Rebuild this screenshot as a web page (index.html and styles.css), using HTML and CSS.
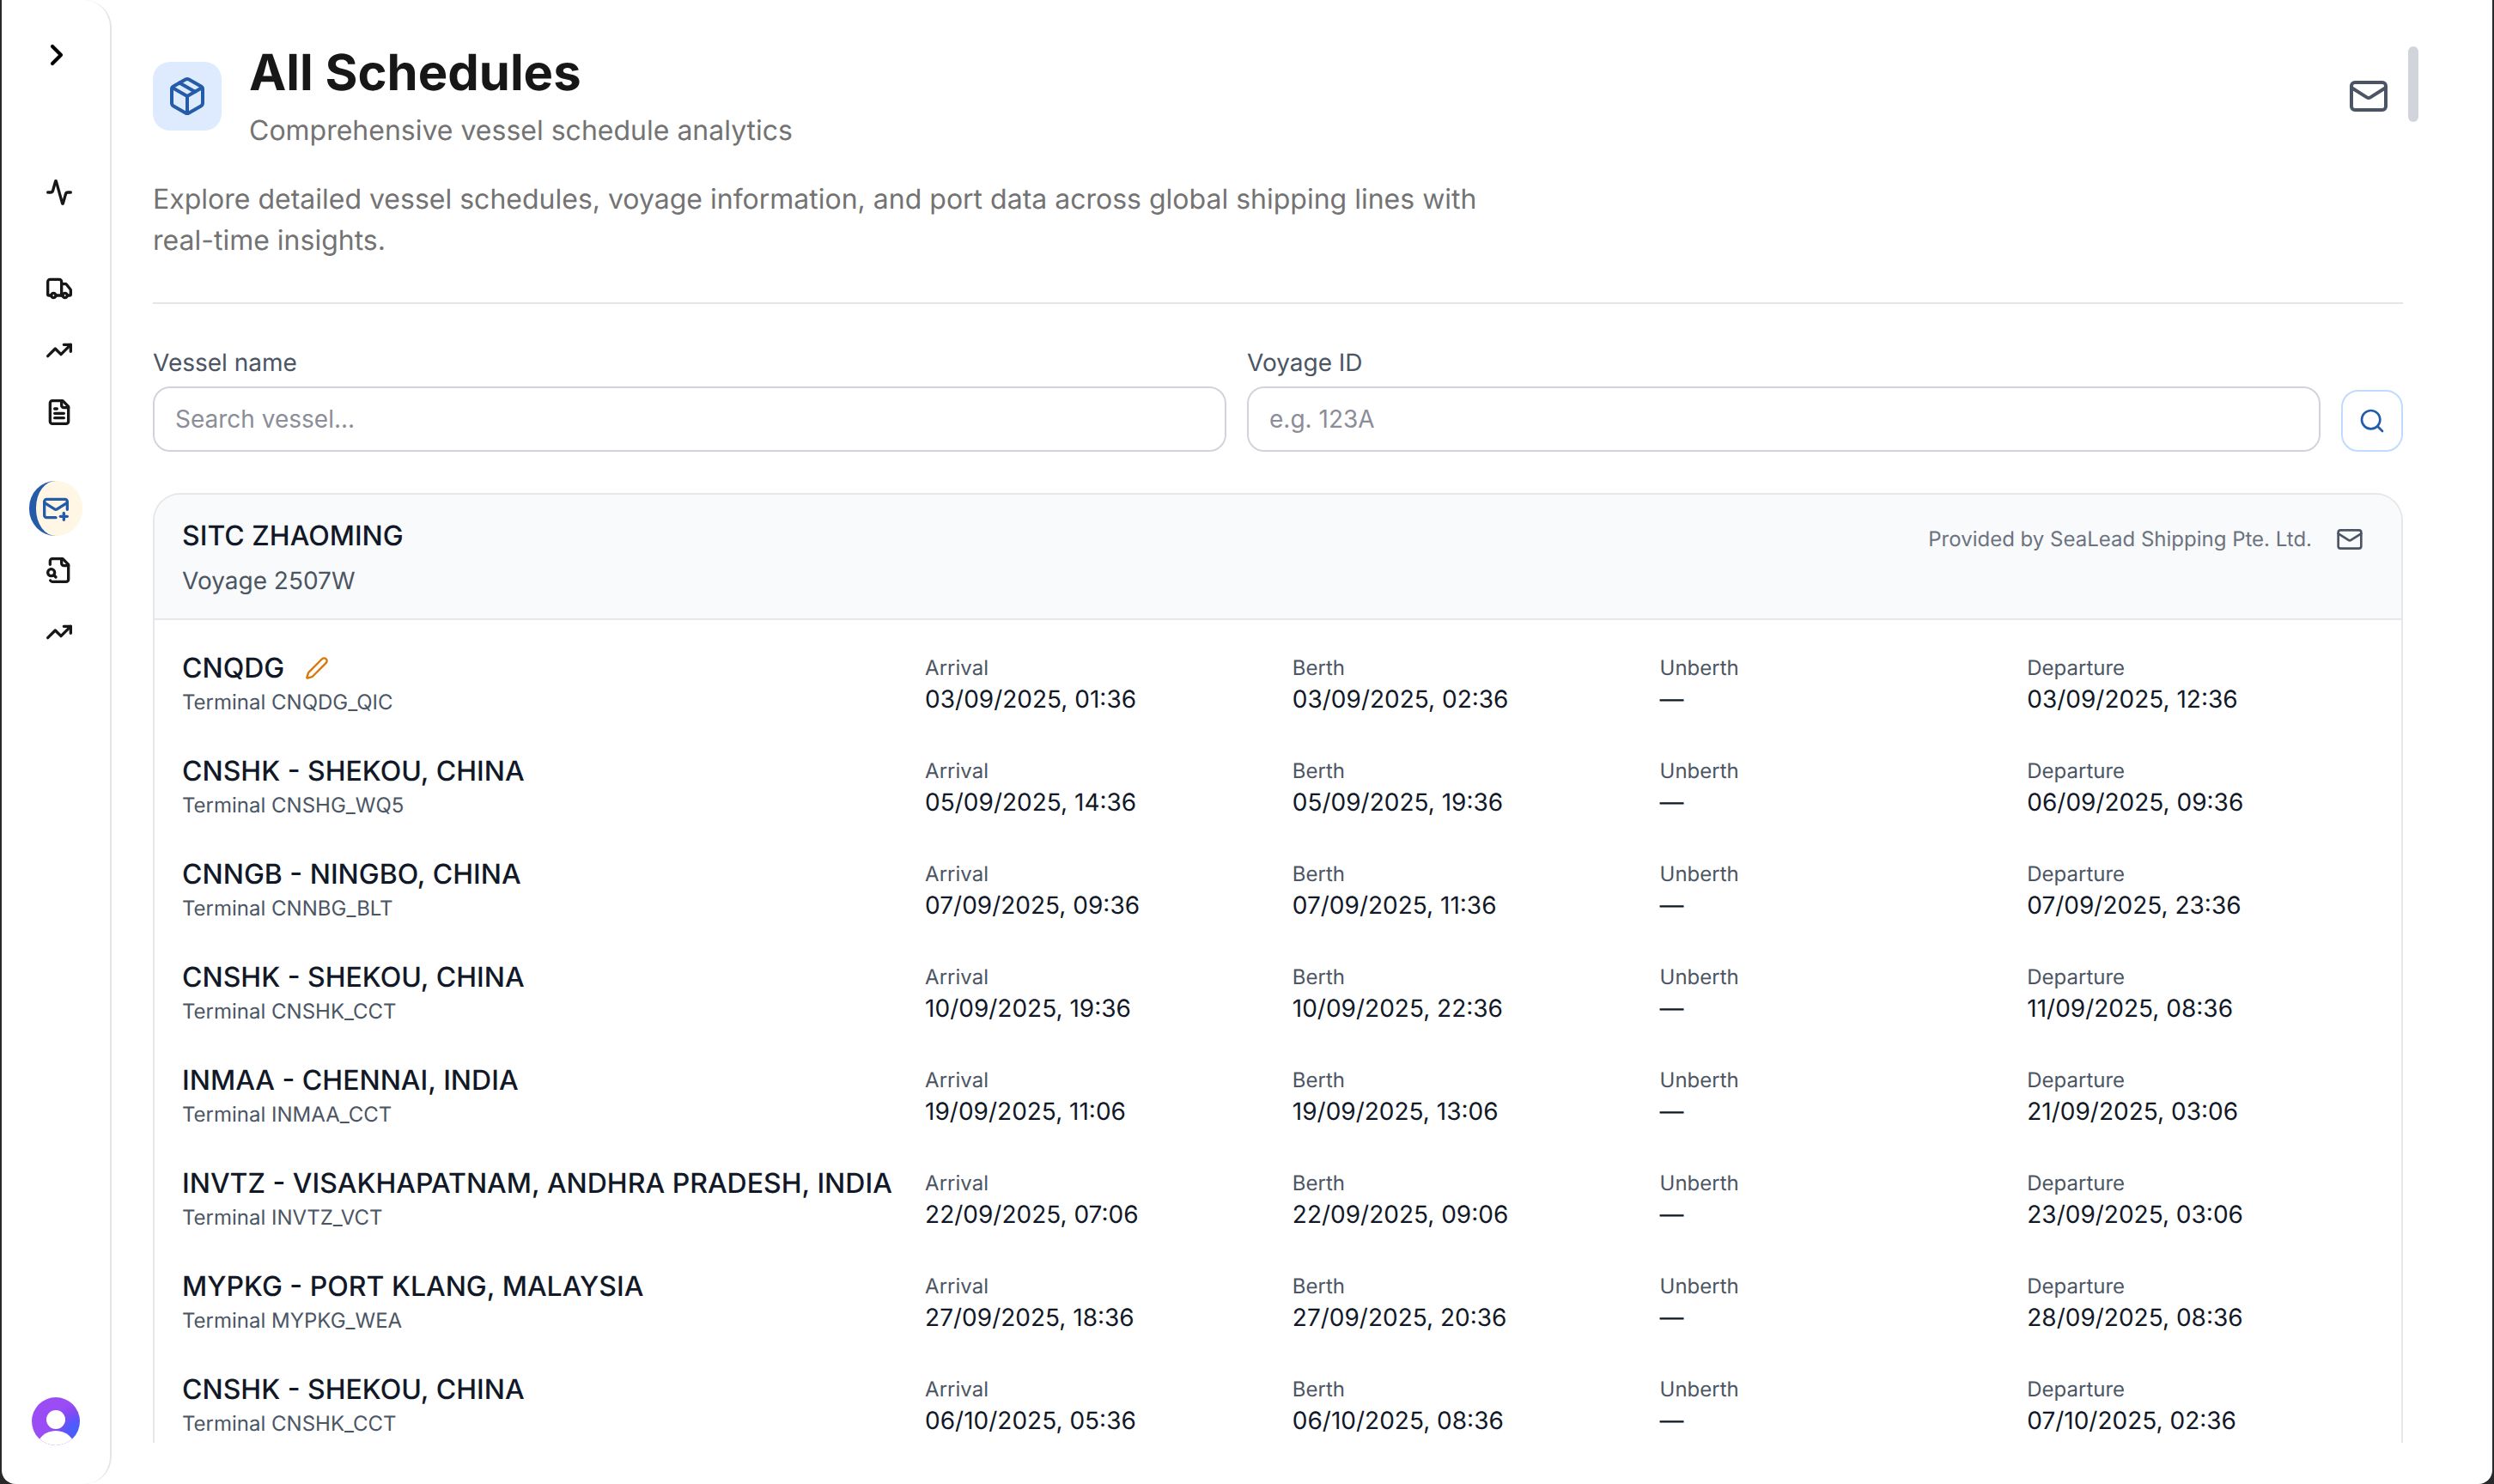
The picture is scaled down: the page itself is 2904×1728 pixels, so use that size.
FILE: index.html
```html
<!DOCTYPE html>
<html lang="en">
<head>
    <meta charset="UTF-8">
    <meta name="viewport" content="width=device-width, initial-scale=1.0">
    <title>All Schedules</title>
    <link rel="stylesheet" href="styles.css">
</head>
<body>
    <!-- Shared icon shapes -->
    <svg class="sprite" aria-hidden="true">
        <symbol id="mail" viewBox="0 0 24 24">
            <rect width="20" height="16" x="2" y="4" rx="2"/>
            <path d="m22 7-8.97 5.7a1.94 1.94 0 0 1-2.06 0L2 7"/>
        </symbol>
        <symbol id="trending" viewBox="0 0 24 24">
            <path d="M22 7 13.5 15.5 8.5 10.5 2 17"/>
            <path d="M16 7h6v6"/>
        </symbol>
    </svg>

    <div class="window">
        <aside class="sidebar">
            <button class="toggle" type="button" aria-label="Expand sidebar">
                <svg class="icon icon-md" viewBox="0 0 24 24"><path d="m9 18 6-6-6-6"/></svg>
            </button>

            <nav class="nav">
                <div class="nav-group">
                    <a class="nav-item" href="#" aria-label="Activity">
                        <svg class="icon icon-sm" viewBox="0 0 24 24"><path d="M22 12h-2.48a2 2 0 0 0-1.93 1.46l-2.35 8.36a.25.25 0 0 1-.48 0L9.24 2.18a.25.25 0 0 0-.48 0l-2.35 8.36A2 2 0 0 1 4.49 12H2"/></svg>
                    </a>
                </div>
                <div class="nav-group">
                    <a class="nav-item" href="#" aria-label="Shipments">
                        <svg class="icon icon-sm" viewBox="0 0 24 24">
                            <path d="M14 18V6a2 2 0 0 0-2-2H4a2 2 0 0 0-2 2v11a1 1 0 0 0 1 1h2"/>
                            <path d="M15 18H9"/>
                            <path d="M19 18h2a1 1 0 0 0 1-1v-3.65a1 1 0 0 0-.22-.624l-3.48-4.35A1 1 0 0 0 17.52 8H14"/>
                            <circle cx="17" cy="18" r="2"/>
                            <circle cx="7" cy="18" r="2"/>
                        </svg>
                    </a>
                    <a class="nav-item" href="#" aria-label="Trends">
                        <svg class="icon icon-sm"><use href="#trending"/></svg>
                    </a>
                    <a class="nav-item" href="#" aria-label="Documents">
                        <svg class="icon icon-sm" viewBox="0 0 24 24">
                            <path d="M15 2H6a2 2 0 0 0-2 2v16a2 2 0 0 0 2 2h12a2 2 0 0 0 2-2V7Z"/>
                            <path d="M14 2v4a2 2 0 0 0 2 2h4"/>
                            <path d="M10 9H8"/>
                            <path d="M16 13H8"/>
                            <path d="M16 17H8"/>
                        </svg>
                    </a>
                </div>
                <div class="nav-group">
                    <a class="nav-item active" href="#" aria-label="Schedules" aria-current="page">
                        <svg class="icon icon-sm" viewBox="0 0 24 24">
                            <path d="M22 13V6a2 2 0 0 0-2-2H4a2 2 0 0 0-2 2v12c0 1.1.9 2 2 2h8"/>
                            <path d="m22 7-8.97 5.7a1.94 1.94 0 0 1-2.06 0L2 7"/>
                            <path d="M19 16v6"/>
                            <path d="M16 19h6"/>
                        </svg>
                    </a>
                    <a class="nav-item" href="#" aria-label="Search documents">
                        <svg class="icon icon-sm" viewBox="0 0 24 24">
                            <path d="M14 2v4a2 2 0 0 0 2 2h4"/>
                            <path d="M4.268 21a2 2 0 0 0 1.727 1H18a2 2 0 0 0 2-2V7l-5-5H6a2 2 0 0 0-2 2v3"/>
                            <path d="m9 18-1.5-1.5"/>
                            <circle cx="5" cy="14" r="3"/>
                        </svg>
                    </a>
                    <a class="nav-item" href="#" aria-label="Analytics">
                        <svg class="icon icon-sm"><use href="#trending"/></svg>
                    </a>
                </div>
            </nav>

            <button class="avatar" type="button" aria-label="Account">
                <svg viewBox="0 0 56 56">
                    <defs>
                        <radialGradient id="avatarFill" cx="0.95" cy="0.72" r="0.62">
                            <stop offset="0" stop-color="#4361fb"/>
                            <stop offset="0.35" stop-color="#5558fa"/>
                            <stop offset="0.7" stop-color="#8749f3"/>
                            <stop offset="1" stop-color="#9b4df5"/>
                        </radialGradient>
                        <clipPath id="avatarClip"><circle cx="28" cy="28" r="28"/></clipPath>
                    </defs>
                    <g clip-path="url(#avatarClip)">
                        <rect width="56" height="56" fill="url(#avatarFill)"/>
                        <circle cx="28" cy="26" r="11" fill="#fff"/>
                        <ellipse cx="28" cy="59" rx="22" ry="20" fill="#fff"/>
                    </g>
                </svg>
            </button>
        </aside>

        <main class="main">
            <div class="content">
                <header class="page-header">
                    <div class="title-row">
                        <div class="title-icon">
                            <svg class="icon icon-lg" viewBox="0 0 24 24">
                                <path d="M11 21.73a2 2 0 0 0 2 0l7-4A2 2 0 0 0 21 16V8a2 2 0 0 0-1-1.73l-7-4a2 2 0 0 0-2 0l-7 4A2 2 0 0 0 3 8v8a2 2 0 0 0 1 1.73z"/>
                                <path d="M12 22V12"/>
                                <path d="M3.29 7 12 12l8.71-5"/>
                                <path d="m7.5 4.27 9 5.15"/>
                            </svg>
                        </div>
                        <div class="title-text">
                            <h1>All Schedules</h1>
                            <p>Comprehensive vessel schedule analytics</p>
                        </div>
                        <button class="mail-btn mail-btn-lg" type="button" aria-label="Email schedules">
                            <svg class="icon icon-lg"><use href="#mail"/></svg>
                        </button>
                    </div>
                    <p class="description">Explore detailed vessel schedules, voyage information, and port data across global shipping lines with real-time insights.</p>
                </header>

                <form class="search-form">
                    <div class="field">
                        <label for="vessel">Vessel name</label>
                        <input id="vessel" type="text" placeholder="Search vessel...">
                    </div>
                    <div class="field">
                        <label for="voyage">Voyage ID</label>
                        <input id="voyage" type="text" placeholder="e.g. 123A">
                    </div>
                    <button class="search-btn" type="button" aria-label="Search">
                        <svg class="icon icon-sm" viewBox="0 0 24 24"><circle cx="11" cy="11" r="8"/><path d="m21 21-4.3-4.3"/></svg>
                    </button>
                </form>

                <section class="card">
                    <div class="card-header">
                        <div>
                            <h2>SITC ZHAOMING</h2>
                            <p class="voyage">Voyage 2507W</p>
                        </div>
                        <div class="provider">
                            <span>Provided by SeaLead Shipping Pte. Ltd.</span>
                            <button class="mail-btn" type="button" aria-label="Email provider">
                                <svg class="icon icon-sm"><use href="#mail"/></svg>
                            </button>
                        </div>
                    </div>

                    <div class="card-body">
                        <div class="port-row">
                            <div class="port">
                                <h3>CNQDG
                                    <button class="edit-btn" type="button" aria-label="Edit port">
                                        <svg class="icon" viewBox="0 0 24 24"><path d="M21.174 6.812a1 1 0 0 0-3.986-3.987L3.842 16.174a2 2 0 0 0-.5.83l-1.321 4.352a.5.5 0 0 0 .623.622l4.353-1.32a2 2 0 0 0 .83-.497z"/></svg>
                                    </button>
                                </h3>
                                <p>Terminal CNQDG_QIC</p>
                            </div>
                            <dl><dt>Arrival</dt><dd>03/09/2025, 01:36</dd></dl>
                            <dl><dt>Berth</dt><dd>03/09/2025, 02:36</dd></dl>
                            <dl><dt>Unberth</dt><dd>—</dd></dl>
                            <dl><dt>Departure</dt><dd>03/09/2025, 12:36</dd></dl>
                        </div>
                        <div class="port-row">
                            <div class="port">
                                <h3>CNSHK - SHEKOU, CHINA</h3>
                                <p>Terminal CNSHG_WQ5</p>
                            </div>
                            <dl><dt>Arrival</dt><dd>05/09/2025, 14:36</dd></dl>
                            <dl><dt>Berth</dt><dd>05/09/2025, 19:36</dd></dl>
                            <dl><dt>Unberth</dt><dd>—</dd></dl>
                            <dl><dt>Departure</dt><dd>06/09/2025, 09:36</dd></dl>
                        </div>
                        <div class="port-row">
                            <div class="port">
                                <h3>CNNGB - NINGBO, CHINA</h3>
                                <p>Terminal CNNBG_BLT</p>
                            </div>
                            <dl><dt>Arrival</dt><dd>07/09/2025, 09:36</dd></dl>
                            <dl><dt>Berth</dt><dd>07/09/2025, 11:36</dd></dl>
                            <dl><dt>Unberth</dt><dd>—</dd></dl>
                            <dl><dt>Departure</dt><dd>07/09/2025, 23:36</dd></dl>
                        </div>
                        <div class="port-row">
                            <div class="port">
                                <h3>CNSHK - SHEKOU, CHINA</h3>
                                <p>Terminal CNSHK_CCT</p>
                            </div>
                            <dl><dt>Arrival</dt><dd>10/09/2025, 19:36</dd></dl>
                            <dl><dt>Berth</dt><dd>10/09/2025, 22:36</dd></dl>
                            <dl><dt>Unberth</dt><dd>—</dd></dl>
                            <dl><dt>Departure</dt><dd>11/09/2025, 08:36</dd></dl>
                        </div>
                        <div class="port-row">
                            <div class="port">
                                <h3>INMAA - CHENNAI, INDIA</h3>
                                <p>Terminal INMAA_CCT</p>
                            </div>
                            <dl><dt>Arrival</dt><dd>19/09/2025, 11:06</dd></dl>
                            <dl><dt>Berth</dt><dd>19/09/2025, 13:06</dd></dl>
                            <dl><dt>Unberth</dt><dd>—</dd></dl>
                            <dl><dt>Departure</dt><dd>21/09/2025, 03:06</dd></dl>
                        </div>
                        <div class="port-row">
                            <div class="port">
                                <h3>INVTZ - VISAKHAPATNAM, ANDHRA PRADESH, INDIA</h3>
                                <p>Terminal INVTZ_VCT</p>
                            </div>
                            <dl><dt>Arrival</dt><dd>22/09/2025, 07:06</dd></dl>
                            <dl><dt>Berth</dt><dd>22/09/2025, 09:06</dd></dl>
                            <dl><dt>Unberth</dt><dd>—</dd></dl>
                            <dl><dt>Departure</dt><dd>23/09/2025, 03:06</dd></dl>
                        </div>
                        <div class="port-row">
                            <div class="port">
                                <h3>MYPKG - PORT KLANG, MALAYSIA</h3>
                                <p>Terminal MYPKG_WEA</p>
                            </div>
                            <dl><dt>Arrival</dt><dd>27/09/2025, 18:36</dd></dl>
                            <dl><dt>Berth</dt><dd>27/09/2025, 20:36</dd></dl>
                            <dl><dt>Unberth</dt><dd>—</dd></dl>
                            <dl><dt>Departure</dt><dd>28/09/2025, 08:36</dd></dl>
                        </div>
                        <div class="port-row">
                            <div class="port">
                                <h3>CNSHK - SHEKOU, CHINA</h3>
                                <p>Terminal CNSHK_CCT</p>
                            </div>
                            <dl><dt>Arrival</dt><dd>06/10/2025, 05:36</dd></dl>
                            <dl><dt>Berth</dt><dd>06/10/2025, 08:36</dd></dl>
                            <dl><dt>Unberth</dt><dd>—</dd></dl>
                            <dl><dt>Departure</dt><dd>07/10/2025, 02:36</dd></dl>
                        </div>
                    </div>
                </section>
            </div>
            <div class="scroll-thumb"></div>
        </main>
    </div>
</body>
</html>
```
FILE: styles.css
```css
* {
    box-sizing: border-box;
    margin: 0;
    padding: 0;
}

body {
    font-family: Inter, "Liberation Sans", sans-serif;
    font-size: 28px;
    line-height: 40px;
    text-rendering: geometricPrecision;
    color: #111827;
    background: #28292a;
}

button {
    background: none;
    border: none;
    cursor: pointer;
    display: flex;
    align-items: center;
    justify-content: center;
    flex-shrink: 0;
}

.sprite {
    display: none;
}

.icon {
    display: block;
    fill: none;
    stroke: currentColor;
    stroke-width: 2;
    stroke-linecap: round;
    stroke-linejoin: round;
}

.icon-sm {
    width: 32px;
    height: 32px;
}

.icon-md {
    width: 40px;
    height: 40px;
}

.icon-lg {
    width: 48px;
    height: 48px;
}

.window {
    display: flex;
    height: 100vh;
    margin: 0 2px;
    background: #fff;
    border-radius: 0 0 16px 16px;
    overflow: hidden;
}

/* Sidebar */
.sidebar {
    width: 128px;
    flex-shrink: 0;
    display: flex;
    flex-direction: column;
    align-items: center;
    padding: 32px 0 45px;
    border-right: 2px solid #e5e5e5;
    border-radius: 0 32px 32px 0;
    color: #171717;
}

.sidebar .icon {
    stroke-width: 2.5;
}

.toggle {
    width: 64px;
    height: 64px;
    padding-left: 2px;
}

.nav {
    flex: 1;
    display: flex;
    flex-direction: column;
    gap: 48px;
    margin-top: 96px;
}

.nav-group {
    display: flex;
    flex-direction: column;
    gap: 8px;
}

.nav-item {
    width: 62px;
    height: 64px;
    display: flex;
    align-items: center;
    justify-content: center;
    padding-left: 8px;
    border-radius: 32px;
    color: inherit;
}

.nav-item.active {
    padding: 0 8px 0 0;
    border-left: 8px solid #245ca8;
    background: #fff6e5;
    color: #245ca8;
}

.avatar {
    width: 56px;
    height: 56px;
}

/* Main area */
.main {
    flex: 1;
    min-width: 0;
    display: flex;
    gap: 6px;
    padding: 48px 86px 48px 48px;
}

.content {
    flex: 1;
    min-width: 0;
    display: flex;
    flex-direction: column;
    gap: 48px;
    overflow: hidden;
}

.scroll-thumb {
    width: 12px;
    height: 88px;
    margin-top: 6px;
    border-radius: 6px;
    background: #d1d5db;
}

.page-header {
    display: flex;
    flex-direction: column;
    gap: 32px;
    padding-bottom: 48px;
    border-bottom: 2px solid #e5e5e5;
    font-size: 32px;
    line-height: 48px;
    color: #737373;
}

.title-row {
    display: flex;
    align-items: center;
    gap: 32px;
}

.title-icon {
    width: 80px;
    height: 80px;
    display: flex;
    align-items: center;
    justify-content: center;
    border-radius: 20px;
    background: #deebff;
    color: #245ca8;
}

.title-text {
    flex: 1;
    display: flex;
    flex-direction: column;
    gap: 8px;
}

h1 {
    font-size: 58px;
    line-height: 72px;
    font-weight: 700;
    color: #171717;
}

.description {
    max-width: 1560px;
}

.mail-btn {
    padding: 12px;
    color: #4b5563;
}

.mail-btn-lg {
    padding: 16px;
}

/* Search */
.search-form {
    display: flex;
    align-items: flex-end;
    gap: 24px;
}

.field {
    flex: 1;
    display: flex;
    flex-direction: column;
    gap: 8px;
    color: #4b5563;
}

.field input {
    width: 100%;
    height: 76px;
    padding: 0 24px;
    border: 2px solid #d1d5db;
    border-radius: 20px;
    font: inherit;
    color: #111827;
    background: #fff;
}

.field input::placeholder {
    color: #8b8d98;
}

.search-btn {
    width: 72px;
    height: 72px;
    border: 2px solid #bfdbfe;
    border-radius: 20px;
    color: #245ca8;
}

/* Schedule card */
.card {
    flex: 1;
    border: 2px solid #e5e7eb;
    border-bottom: none;
    border-radius: 32px 32px 0 0;
    overflow: hidden;
}

.card-header {
    display: flex;
    align-items: flex-start;
    justify-content: space-between;
    padding: 24px 32px;
    border-bottom: 2px solid #e5e7eb;
    background: #f9fafb;
}

h2,
h3 {
    font-size: 32px;
    line-height: 48px;
    font-weight: 500;
}

.voyage {
    margin-top: 8px;
    color: #4b5563;
}

.provider {
    display: flex;
    align-items: center;
    gap: 16px;
    font-size: 24px;
    color: #6b7280;
}

.card-body {
    padding: 12px 32px;
}

.port-row {
    display: grid;
    grid-template-columns: 25fr 12fr 12fr 12fr 12fr;
    column-gap: 24px;
    align-items: end;
    padding: 20px 0;
}

.port h3 {
    display: flex;
    align-items: center;
    gap: 24px;
    white-space: nowrap;
}

.port p,
.port-row dt {
    font-size: 24px;
    line-height: 32px;
    color: #4b5563;
}

.edit-btn {
    color: #d97706;
}

.edit-btn .icon {
    width: 28px;
    height: 28px;
}
```
